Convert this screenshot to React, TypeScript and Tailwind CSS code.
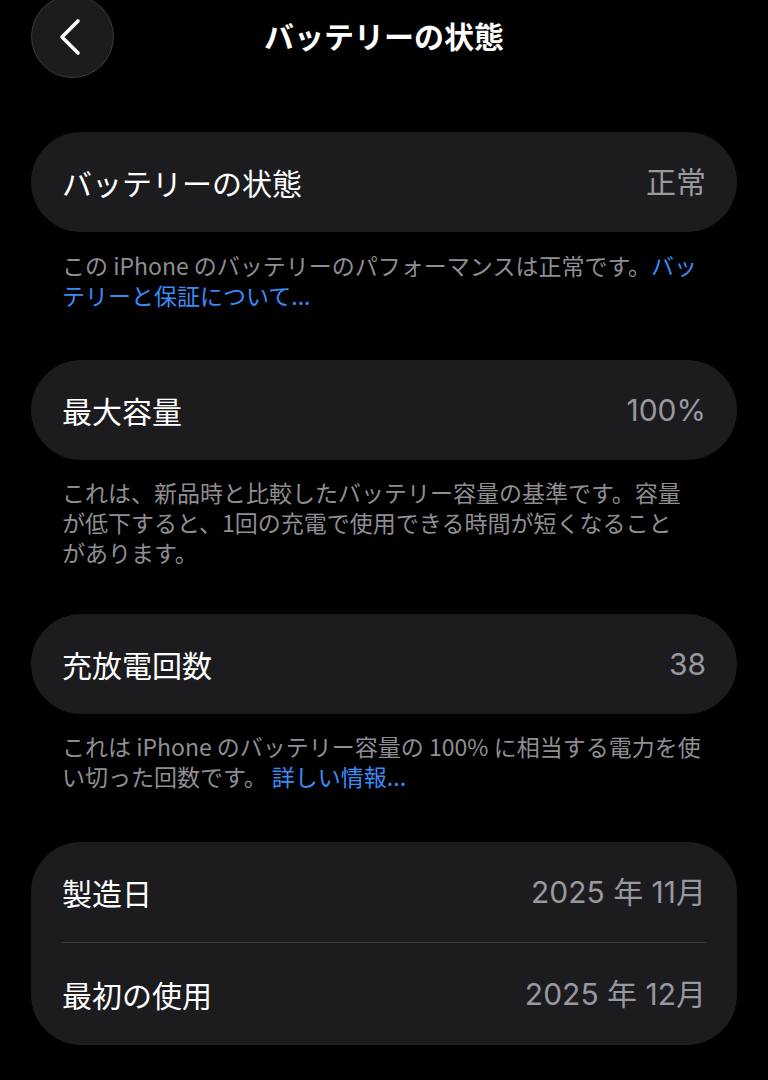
const font = { fontFamily: '"Noto Sans CJK JP", "Noto Sans", sans-serif' };
const valueFont = { fontFamily: 'Inter, "Noto Sans CJK JP", sans-serif' };

const Row = ({ label, value, tall }: { label: string; value: string; tall?: boolean }) => (
  <div className={`${tall ? "h-[102px]" : "h-[100px]"} flex items-center justify-between px-[31px]`}>
    <span className="text-[30px] text-white leading-none">{label}</span>
    <span className="text-[30px] text-[#98989f] leading-none" style={valueFont}>
      {value}
    </span>
  </div>
);

const Card = ({ children }: { children: React.ReactNode }) => (
  <div className="bg-[#1c1c1e] rounded-[50px]">{children}</div>
);

export default function App() {
  return (
    <div className="min-h-screen bg-black overflow-hidden" style={font}>
      {/* ヘッダー */}
      <header className="relative h-[132px] px-[31px] flex items-start">
        <button className="-mt-[5px] w-[83px] h-[83px] rounded-full bg-[#1c1c1e] border border-[#3a3a3c] flex items-center justify-center">
          <svg width="24" height="38" viewBox="0 0 24 38" className="-ml-[5px]">
            <path
              d="M20 3 L4 19 L20 35"
              fill="none"
              stroke="white"
              strokeWidth="3.6"
              strokeLinecap="round"
              strokeLinejoin="round"
            />
          </svg>
        </button>
        <h1 className="absolute left-0 right-0 top-[16px] text-center text-[30px] leading-[38px] font-bold text-white">
          バッテリーの状態
        </h1>
      </header>

      <main className="px-[31px]">
        <Card>
          <Row label="バッテリーの状態" value="正常" />
        </Card>
        <p className="pt-[18px] px-[31px] text-[23px] leading-[30px] text-[#8e8e93] h-[128px]">
          この iPhone のバッテリーのパフォーマンスは正常です。
          <span className="text-[#3a8cf5]">バッ</span>
          <br />
          <span className="text-[#3a8cf5]">テリーと保証について...</span>
        </p>

        <Card>
          <Row label="最大容量" value="100%" />
        </Card>
        <p className="pt-[17px] px-[31px] text-[23px] leading-[30px] text-[#8e8e93] h-[154px]">
          これは、新品時と比較したバッテリー容量の基準です。容量
          <br />
          が低下すると、1回の充電で使用できる時間が短くなること
          <br />
          があります。
        </p>

        <Card>
          <Row label="充放電回数" value="38" />
        </Card>
        <p className="pt-[17px] px-[31px] text-[23px] leading-[30px] text-[#8e8e93] h-[128px]">
          これは iPhone のバッテリー容量の 100% に相当する電力を使
          <br />
          い切った回数です。 <span className="text-[#3a8cf5]">詳しい情報...</span>
        </p>

        <Card>
          <Row label="製造日" value="2025 年 11月" />
          <div className="mx-[31px] h-px bg-[#3a3a3c]" />
          <Row label="最初の使用" value="2025 年 12月" tall />
        </Card>
      </main>
    </div>
  );
}
